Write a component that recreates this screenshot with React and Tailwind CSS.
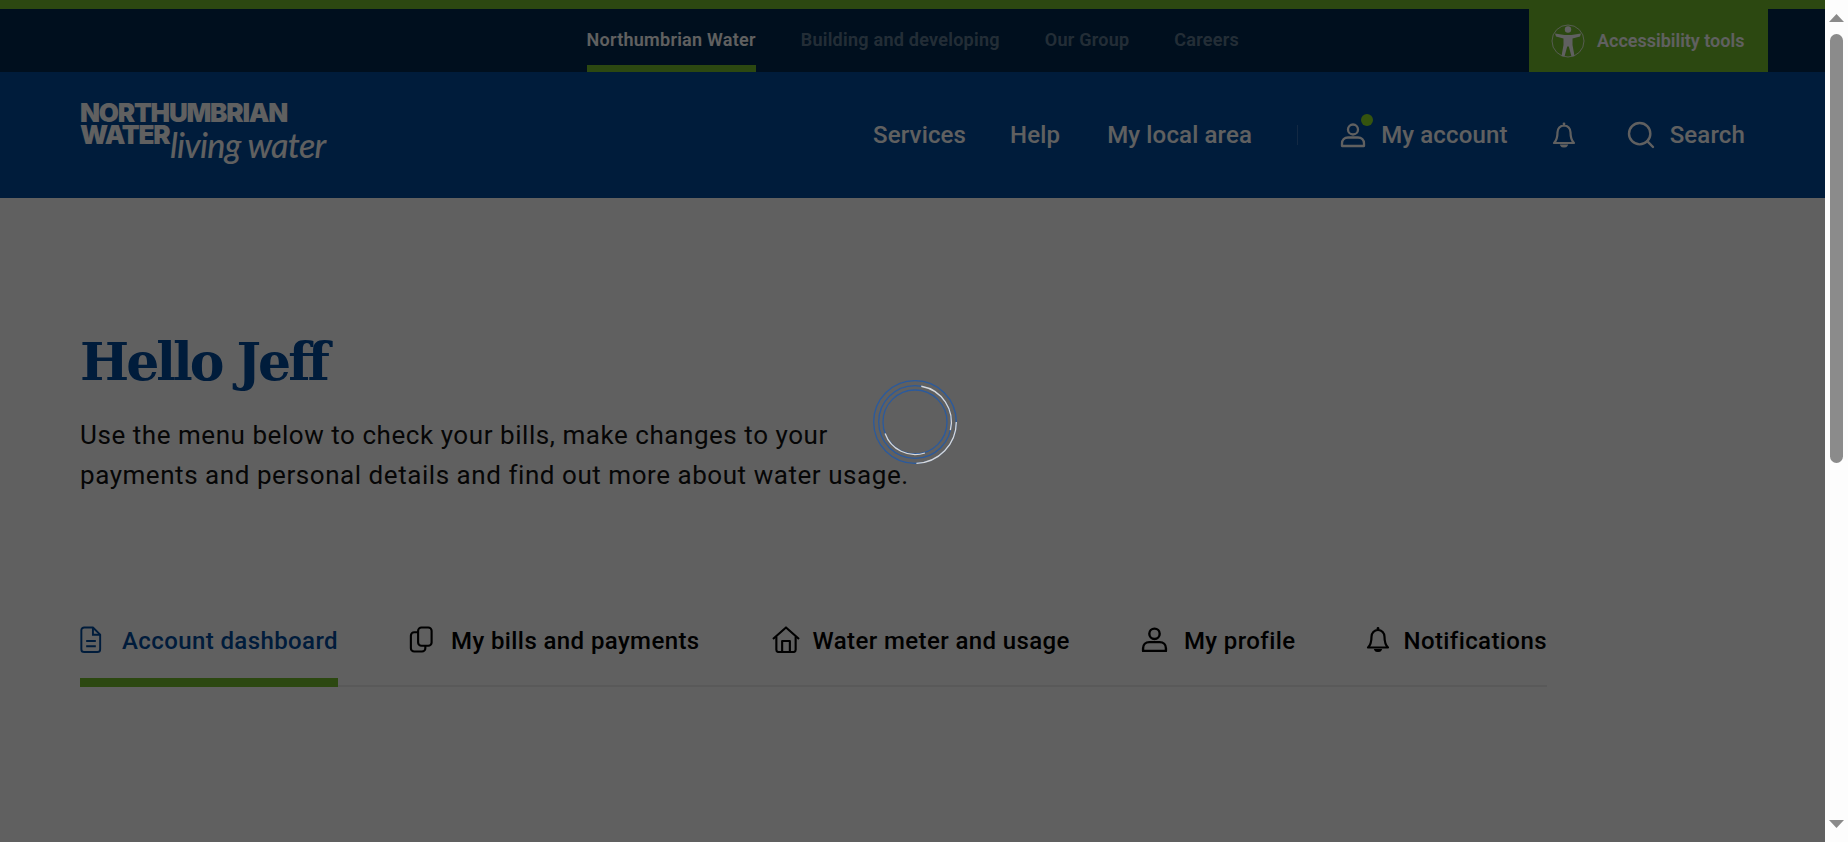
import React from 'react';
import { Search } from 'lucide-react';

const sans = 'font-[Roboto,"Liberation_Sans",sans-serif]';

function PersonIcon({ className }) {
  return (
    <svg viewBox="0 0 26 26" fill="none" stroke="currentColor" strokeWidth="2.300" className={className}>
      <circle cx="13" cy="7.500" r="5" />
      <path d="M2 24v-2.500C2 18 4.500 15.500 8 15.500h10c3.500 0 6 2.500 6 6V24z" strokeLinejoin="round" />
    </svg>
  );
}

function BellIcon({ className }) {
  return (
    <svg viewBox="0 0 24 26" fill="none" stroke="currentColor" strokeWidth="2.200" className={className}>
      <path d="M12 3.500c-3.800 0-6.500 3-6.500 6.800 0 5.200-.8 8.200-3.500 10.700h20c-2.700-2.500-3.500-5.500-3.500-10.700 0-3.800-2.700-6.800-6.500-6.800z" strokeLinejoin="round" />
      <circle cx="12" cy="2" r="1.400" fill="currentColor" stroke="none" />
      <path d="M9.500 23.500c.6 1.300 4.400 1.300 5 0z" fill="currentColor" />
    </svg>
  );
}

function DocIcon({ className }) {
  return (
    <svg viewBox="0 0 22 28" fill="none" stroke="currentColor" strokeWidth="2" className={className}>
      <path d="M4 1.500h9l7.500 7.500v15a3 3 0 0 1-3 3H4a3 3 0 0 1-3-3V4.500a3 3 0 0 1 3-3z" strokeLinejoin="round" />
      <path d="M13 1.500V9h7.500" />
      <path d="M6 15.500h10M6 21h10" strokeWidth="2.200" />
    </svg>
  );
}

function CopyIcon({ className }) {
  return (
    <svg viewBox="0 0 24 28" fill="none" stroke="currentColor" strokeWidth="2.200" className={className}>
      <rect x="9" y="1.500" width="14" height="19" rx="3.500" />
      <path d="M9 6.500H5a3.500 3.500 0 0 0-3.500 3.500v13A3.500 3.500 0 0 0 5 26.500h8a3.500 3.500 0 0 0 3.500-3.500v-2.500" />
    </svg>
  );
}

function HouseIcon({ className }) {
  return (
    <svg viewBox="0 0 30 28" fill="none" stroke="currentColor" strokeWidth="2.200" strokeLinejoin="round" className={className}>
      <path d="M1.500 13.500 15 1.500l13.500 12" />
      <path d="M5 11v13.500a2.500 2.500 0 0 0 2.500 2.500h15a2.500 2.500 0 0 0 2.500-2.500V11" />
      <path d="M11 27V15.500h8V27" />
    </svg>
  );
}

function AccessIcon({ className }) {
  return (
    <svg viewBox="0 0 34 34" className={className}>
      <circle cx="17" cy="17" r="16" fill="none" stroke="currentColor" strokeWidth="0.8" />
      <circle cx="17" cy="5.500" r="3.200" fill="currentColor" />
      <path
        d="M4 9.500 5 12.500 12.500 14.500 12.500 21 10.500 32 13.500 32.500 16.200 22.500 17.800 22.500 20.500 32.500 23.500 32 21.500 21 21.500 14.500 29 12.500 30 9.500 20.500 11 13.500 11z"
        fill="currentColor"
      />
    </svg>
  );
}

function Spinner() {
  return (
    <svg viewBox="0 0 100 100" fill="none" strokeWidth="1.300" className="h-[100px] w-[100px]">
      <circle cx="50" cy="50" r="41.300" stroke="#2a5a9e" />
      <circle cx="50" cy="50" r="36.300" stroke="#2a5a9e" />
      <circle cx="50" cy="50" r="32" stroke="#2a5a9e" />
      <path d="M91.300 50A41.300 41.300 0 0 1 51.400 91.300" stroke="#d8d8d8" />
      <path d="M56.300 14.250A36.300 36.300 0 0 1 85.400 58.200" stroke="#d8d8d8" />
      <path d="M59.900 81A32 32 0 0 1 20.100 61.500" stroke="#d8d8d8" />
    </svg>
  );
}

function Scrollbar() {
  return (
    <div className="flex h-full w-[23px] shrink-0 flex-col items-center bg-[#fdfdfd]">
      <svg viewBox="0 0 15 8" className="mt-[14px] h-2 w-[15px] fill-[#8a8a8a]">
        <path d="M7.500 0 15 8H0z" />
      </svg>
      <div className="mt-3 h-[429px] w-[13px] rounded-full bg-[#8b8b8b]" />
      <svg viewBox="0 0 15 8" className="mt-[357px] h-2 w-[15px] fill-[#8a8a8a]">
        <path d="M0 0h15L7.500 8z" />
      </svg>
    </div>
  );
}

const topLinks = [
  { label: 'Northumbrian Water', active: true },
  { label: 'Building and developing' },
  { label: 'Our Group' },
  { label: 'Careers' },
];

const tabs = [
  { label: 'Account dashboard', icon: DocIcon, iconClass: 'h-[27px] w-[22px]', active: true, gap: 'gap-[20px]' },
  { label: 'My bills and payments', icon: CopyIcon, iconClass: 'h-[27px] w-[24px]', gap: 'gap-[18px]' },
  { label: 'Water meter and usage', icon: HouseIcon, iconClass: 'h-[27px] w-[30px]', gap: 'gap-[12px]' },
  { label: 'My profile', icon: PersonIcon, iconClass: 'h-[27px] w-[27px]', gap: 'gap-[16px]' },
  { label: 'Notifications', icon: BellIcon, iconClass: 'h-[27px] w-[24px]', gap: 'gap-[13px]' },
];

export default function App() {
  return (
    <div className={`flex h-screen overflow-hidden bg-white ${sans}`}>
      <div className="relative min-w-0 flex-1 overflow-hidden">
        <div className="h-[9px] bg-[#75c02f]" />

        <div className="flex h-[63px] items-stretch justify-end bg-[#002a50] pr-[57px]">
          <nav className="mr-[290px] flex gap-[45px]">
            {topLinks.map((link) => (
              <a
                key={link.label}
                className={`flex items-center border-b-[7px] pt-[4px] text-[18px] font-semibold tracking-[0.26px] ${
                  link.active ? 'border-[#75c02f] text-white' : 'border-transparent text-white/40'
                }`}
              >
                {link.label}
              </a>
            ))}
          </nav>
          <button className="flex w-[239px] items-center gap-[12px] bg-[#75c02f] pl-[22px] text-[18px] font-semibold text-white">
            <AccessIcon className="h-[34px] w-[34px]" />
            Accessibility tools
          </button>
        </div>

        <header className="flex h-[126px] items-center justify-between bg-[#004a9e] px-[80px] text-white">
          <div className="relative h-[62px] w-[250px]">
            <div className="absolute left-0 top-[-2px] font-['Inter'] text-[26px] leading-[22px] font-black tracking-[-1.200px] uppercase">
              <div>Northumbrian</div>
              <div className="w-fit">Water</div>
            </div>
            <div className="absolute left-[90px] top-[21px] font-['Lato'] text-[34px] leading-[40px] font-medium whitespace-nowrap italic tracking-[-0.7px]">
              living water
            </div>
          </div>

          <nav className="flex items-center text-[24px] font-medium whitespace-nowrap tracking-[0.15px]">
            <a className="mr-[44px]">Services</a>
            <a className="mr-[47px]">Help</a>
            <a className="mr-[45px]">My local area</a>
            <span className="mr-[42px] h-5 w-px bg-white/20" />
            <a className="relative mr-[44px] flex items-center gap-[15px]">
              <PersonIcon className="h-[26px] w-[26px]" />
              <span className="absolute left-[21px] top-[-3px] h-3 w-3 rounded-full bg-[#8ee026]" />
              My account
            </a>
            <BellIcon className="mr-[49px] h-[26px] w-[24px]" />
            <a className="flex items-center gap-[13px]">
              <Search className="h-[32px] w-[32px]" strokeWidth={1.800} />
              Search
            </a>
          </nav>
        </header>

        <main className="px-[80px] pt-[128px]">
          <h1 className="font-['DejaVu_Serif'] text-[52px] leading-[72px] font-bold tracking-[-3px] text-[#004a9e]">
            Hello Jeff
          </h1>
          <p className="mt-[17px] max-w-[900px] text-[26px] leading-[40px] tracking-[0.55px] text-[#111]">
            Use the menu below to check your bills, make changes to your
            <br />
            payments and personal details and find out more about water usage.
          </p>

          <div className="mt-[122px] flex w-[1467px] gap-[71px] border-b-2 border-black/[.07]">
            {tabs.map((tab) => (
              <a
                key={tab.label}
                className={`-mb-[2px] flex h-[70px] shrink-0 items-start whitespace-nowrap ${tab.gap} border-b-[9px] pt-[6px] text-[24px] leading-[36px] font-medium tracking-[0.4px] ${
                  tab.active ? 'border-[#75c02f] text-[#004a9e]' : 'border-transparent text-black'
                }`}
              >
                <tab.icon className={`${tab.iconClass} mt-[3px] shrink-0`} />
                {tab.label}
              </a>
            ))}
          </div>
        </main>

        <div className="absolute inset-0 flex items-center justify-center bg-black/[.625] pl-[4px] pt-[1px]">
          <Spinner />
        </div>
      </div>
      <Scrollbar />
    </div>
  );
}
